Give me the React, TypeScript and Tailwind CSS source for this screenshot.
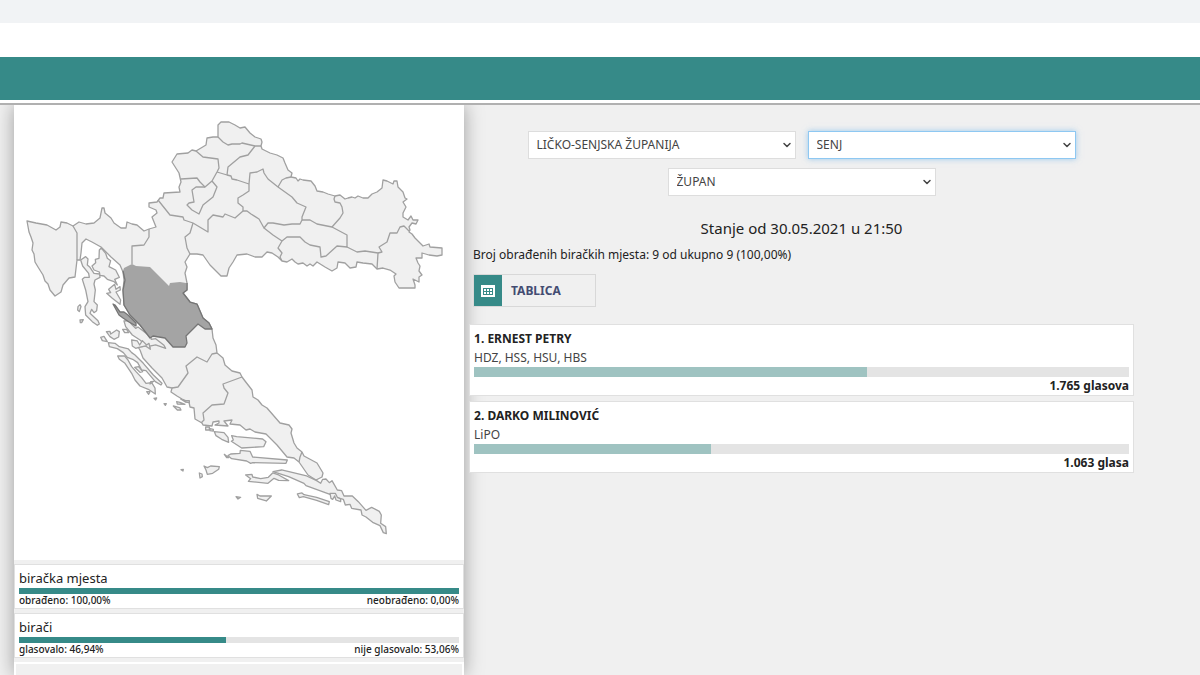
import { useState } from 'react'
import { ChevronDown } from 'lucide-react'

interface Candidate {
  id: number
  name: string
  parties: string
  votes: string
  percent: number
}

const candidates: Candidate[] = [
  { id: 1, name: 'ERNEST PETRY', parties: 'HDZ, HSS, HSU, HBS', votes: '1.765 glasova', percent: 60.06 },
  { id: 2, name: 'DARKO MILINOVIĆ', parties: 'LiPO', votes: '1.063 glasa', percent: 36.17 },
]

const turnout = [
  { title: 'biračka mjesta', left: 'obrađeno: 100,00%', right: 'neobrađeno: 0,00%', percent: 100 },
  { title: 'birači', left: 'glasovalo: 46,94%', right: 'nije glasovalo: 53,06%', percent: 46.94 },
]

// Outer edge of the mainland
const mainland =
  'M218 137L218 125L221 122L229 122L235 125L240 128L245 127L250 133L255 137L261 139L262 142L261 146L262 149L270 153L277 155L283 158L285 163L288 170L292 173L291 177L296 178L298 181L300 179L303 180L311 181L315 186L317 191L323 192L328 194L335 196L340 195L345 199L348 198L352 197L355 198L358 196L363 198L368 198L372 194L377 192L382 188L383 180L387 181L393 184L394 181L397 181L398 187L403 192L405 198L407 199L403 202L406 207L403 213L403 217L408 220L411 216L413 220L418 220L416 224L412 223L409 227L410 230L409 232L412 234L415 238L419 242L423 246L429 244L430 247L442 248L442 255L437 256L429 255L422 253L422 258L416 258L418 263L420 266L419 271L422 275L419 277L419 282L413 279L415 285L415 288L399 288L395 282L394 276L396 274L390 270L383 268L377 269L372 264L363 263L357 262L356 267L350 268L345 263L338 262L337 268L332 271L325 267L317 262L313 266L310 264L307 266L303 263L298 264L295 262L292 259L287 262L282 261L278 257L272 253L267 252L262 257L255 257L247 254L237 255L233 262L229 268L227 276L221 276L215 270L210 265L203 255L197 254L190 254L185 262L187 267L185 273L187 283L187 290L183 293L190 302L197 304L203 318L209 323L212 329L213 338L216 345L217 353L223 358L225 365L232 371L240 373L242 377L245 381L252 390L253 397L258 400L262 405L267 408L280 423L289 425L292 429L291 433L294 443L297 448L302 452L304 456L317 463L323 473L322 477L316 480L308 475L299 462L294 458L287 457L277 445L266 434L255 432L250 429L246 430L240 425L230 424L232 420L224 421L228 426L215 425L219 423L219 421L213 422L212 426L203 425L202 423L195 419L194 408L190 407L189 402L182 399L177 396L171 392L172 388L167 387L162 378L152 368L143 358L140 350L138 347L146 346L150 348L148 343L151 338L140 325L130 315L124 305L123 290L124 280L123 272L120 265L111 257L101 247L92 242L86 239L82 243L81 253L80 260L77 260L75 277L69 278L63 285L61 292L55 296L50 290L48 284L45 281L43 275L38 267L35 262L34 254L32 250L33 243L31 237L29 232L27 221L36 223L47 225L56 230L60 227L61 222L67 223L73 226L79 222L86 224L94 223L100 218L101 213L102 208L104 208L105 213L111 218L114 223L121 228L126 228L127 222L132 224L137 225L144 231L149 229L156 227L152 217L157 213L156 210L149 207L149 203L157 202L160 198L163 198L164 193L180 192L179 187L181 182L179 173L172 162L177 154L188 153L192 150L196 151L206 145L207 138L213 137Z'

// Borders between counties
const borders = [
  'M218 137L223 142L228 145L232 144L240 144L242 143L255 146L261 146',
  'M196 151L203 157L218 159L219 168L217 172L212 181L205 187L200 182L197 178L181 179',
  'M255 146L248 155L240 157L228 167L227 175',
  'M217 172L227 175L231 176L232 179L237 180L249 184',
  'M249 184L250 173L257 172L263 169L264 173L268 179L278 187L292 197L297 203L306 207L302 217L302 220L300 224L292 224L284 225L273 223L268 223L264 228L259 219L251 214L247 211L243 211L243 207L238 203L238 198L243 195L249 191Z',
  'M278 187L282 180L286 178L291 177',
  'M302 220L310 220L317 224L332 227L340 218L343 213L342 207L340 203L335 202L334 199L335 196',
  'M332 227L347 235L347 247L337 246L326 256L321 257L320 247L310 245L305 242L300 237L287 237L282 241L278 248L282 253L280 257L282 261',
  'M264 228L273 235L282 241',
  'M347 247L357 252L365 251L378 253L377 269',
  'M378 253L382 252L379 247L387 242L390 233L397 233L400 227L404 226L409 231',
  'M212 181L217 187L213 197L203 205L199 214L192 210L187 205L189 203L194 202L192 190L196 187L205 187',
  'M158 200L170 215L183 217L184 220L193 223L208 232L208 220L213 215L223 217L225 214L235 218L243 211',
  'M193 223L190 233L185 237L187 248L190 254',
  'M149 229L149 237L144 245L132 246L132 264',
  'M73 226L77 233L77 260',
  'M217 353L212 354L207 362L197 357L186 366L188 373L178 387L172 388',
  'M242 377L223 384L224 388L228 393L224 404L212 405L203 413L204 420L201 423',
  'M302 452L300 457L299 462',
]

const lika =
  'M132 264L136 266L150 267L169 286L170 283L180 282L186 283L187 290L183 293L190 302L197 304L203 318L209 323L212 329L205 329L198 324L186 336L187 343L185 347L173 347L165 338L153 336L150 338L140 325L130 315L124 305L123 290L125 280L123 271L124 268Z'

// Islands, traced per sheet at three times the map scale
const islandSheets = [
  {
    transform: 'translate(14 190) scale(0.3333)',
    paths: [
      'M200 210L215 200L222 207L220 225L228 232L240 250L257 252L258 262L243 270L240 282L244 300L240 335L250 345L248 362L240 368L233 358L228 370L252 392L256 402L250 406L235 395L215 375L213 350L222 335L215 300L205 268L212 262L226 262L224 250L206 228Z',
      'M234 228L245 218L244 208L255 205L256 180L262 174L275 190L280 205L290 212L285 230L305 240L316 262L302 268L310 285L300 275L280 268L270 258L258 256L256 246L240 240Z',
      'M278 310L290 308L284 298L302 283L306 298L318 290L319 300L306 306L320 330L318 343L295 325Z',
      'M192 350L198 344L201 350L196 365L191 360Z',
      'M198 390L208 389L203 398L199 398Z',
      'M330 393L345 392L352 402L365 415L372 411L410 440L412 448L425 446L450 466L455 475L425 465L400 470L378 450L355 435L335 410Z',
      'M326 418L338 418L344 428L332 428Z',
      'M260 442L270 439L280 455L265 452Z',
      'M277 425L288 424L290 432L308 420L316 425L314 441L300 448L288 440Z',
      'M353 450L370 453L377 465L385 452L398 465L405 460L409 478L395 468L375 472L365 475L355 468Z',
    ],
  },
  {
    transform: 'translate(90 250) scale(0.3333)',
    paths: [
      'M55 278L75 280L88 290L115 297L125 308L135 315L160 340L190 375L216 400L213 405L196 395L168 362L155 360L143 338L128 328L112 322L100 308L82 296L58 290Z',
      'M83 318L104 318L114 330L125 350L138 365L155 383L168 400L185 398L195 414L196 432L175 418L150 408L135 390L125 370L105 340L88 328Z',
      'M134 352L146 350L158 365L150 367Z',
      'M182 395L192 394L180 402Z',
      'M170 425L180 425L176 433Z',
      'M192 445L200 444L197 450Z',
      'M222 461L229 461L226 466Z',
      'M260 455L270 457L285 463L262 462Z',
      'M272 447L282 451L298 452L298 458L286 456Z',
      'M250 468L270 474L273 480L262 480Z',
    ],
  },
  {
    transform: 'translate(200 380) scale(0.3333)',
    paths: [
      'M17 141L28 141L28 150L17 150Z',
      'M30 146L40 148L40 153L30 152Z',
      'M43 155L72 158L84 172L86 187L65 178L48 167Z',
      'M95 167L110 170L188 177L198 185L191 200L125 204L94 184L100 180Z',
      'M73 223L86 233L80 233Z',
      'M84 227L92 222L120 220L121 211L150 214L158 231L262 240L258 250L158 248L152 250L140 243L95 236Z',
      'M12 258L22 263L32 258L58 260L56 268L38 280L22 283L18 270Z',
      'M-2 279L6 282L7 290L0 294Z',
      'M-57 269L-50 268L-51 273Z',
      'M137 285L156 283L158 291L182 296L205 292L218 279L236 285L266 302L236 301L222 295L204 310L145 304L152 296Z',
      'M219 275L245 270L320 288L350 302L362 310L368 298L378 297L388 308L396 302L412 330L425 332L432 348L457 348L475 365L498 391L515 382L538 394L544 405L542 430L557 440L559 461L550 458L540 437L518 427L498 411L486 405L483 390L455 385L450 373L436 375L430 358L410 352L390 343L318 317L312 310L266 290Z',
      'M390 340L406 340L412 352L422 357L422 365L408 360L404 348L398 358L393 355Z',
      'M292 342L306 339L312 344L350 352L388 365L386 374L350 361L310 350L298 353Z',
      'M171 343L180 348L214 348L199 363L173 355Z',
      'M108 350L122 352L114 357Z',
    ],
  },
]

function CountyMap() {
  return (
    <svg viewBox="14 105 450 455" className="block w-full" role="img" aria-label="Karta županija">
      <g fill="#f0f0f0" stroke="#a0a0a0" strokeLinejoin="round">
        <path d={mainland} strokeWidth="1.3" />
        <g fill="none" strokeWidth="1.3">
          {borders.map((d) => (
            <path key={d} d={d} />
          ))}
        </g>
        {islandSheets.map((sheet) => (
          <g key={sheet.transform} transform={sheet.transform} strokeWidth="3.9">
            {sheet.paths.map((d) => (
              <path key={d} d={d} />
            ))}
          </g>
        ))}
      </g>
      <g fill="#a4a4a4" stroke="#757575" strokeLinejoin="round">
        <path d={lika} stroke="none" />
        <path
          d="M187 283L187 290L183 293L190 302L197 304L203 318L209 323L212 329L205 329L198 324L186 336L187 343L185 347L173 347L165 338L153 336L150 338L140 325L130 315L124 305L123 290L125 280L123 271"
          fill="none"
          strokeWidth="1.3"
        />
        <path d="M113 304L115 305L120 312L124 312L128 315L136 323L136 326L129 322L123 318L119 315Z" strokeWidth="1.3" />
      </g>
    </svg>
  )
}

interface FilterSelectProps {
  label: string
  options: string[]
  active?: boolean
}

function FilterSelect({ label, options, active = false }: FilterSelectProps) {
  const [value, setValue] = useState(options[0])

  return (
    <div className="relative w-[268px]">
      <select
        aria-label={label}
        value={value}
        onChange={(e) => setValue(e.target.value)}
        className={`block w-full h-7 appearance-none border bg-white pl-2 pr-6 text-[12px] text-[#444444] outline-none ${
          active ? 'border-[#8ec8f2] shadow-[0_0_6px_rgba(102,175,233,0.6)]' : 'border-[#dddddd]'
        }`}
      >
        {options.map((option) => (
          <option key={option}>{option}</option>
        ))}
      </select>
      <ChevronDown className="pointer-events-none absolute right-[3px] top-2 h-3 w-3 text-[#444444]" strokeWidth={3} />
    </div>
  )
}

export default function App() {
  return (
    <div className="flex min-h-screen flex-col bg-[#f0f0f0] font-['Noto_Sans',sans-serif] text-[#222222]">
      {/* Header */}
      <header className="relative z-10 border-b-2 border-[#b0b0b0] bg-white">
        <div className="h-[23px] bg-[#f1f3f5]" />
        <div className="h-[34px]" />
        <div className="h-[43px] bg-[#368a88]" />
        <div className="h-[3px]" />
      </header>

      <div className="flex flex-1">
        {/* Map and turnout */}
        <aside className="ml-3.5 flex w-[450px] shrink-0 flex-col bg-[#f0f0f0] shadow-[0_0_18px_rgba(0,0,0,0.35)]">
          <div className="bg-white">
            <CountyMap />
          </div>
          <div className="flex flex-1 flex-col gap-1 pt-1">
            {turnout.map((item) => (
              <section key={item.title} className="border border-[#e0e0e0] bg-white px-1 pb-0.5 pt-[3px]">
                <h3 className="text-[13px] leading-5">{item.title}</h3>
                <div className="h-1.5 bg-[#e4e4e4]">
                  <div className="h-full bg-[#368a88]" style={{ width: `${item.percent}%` }} />
                </div>
                <div className="flex justify-between text-[10px] font-medium leading-3">
                  <span>{item.left}</span>
                  <span>{item.right}</span>
                </div>
              </section>
            ))}
            <div className="flex-1 border-2 border-b-0 border-white" />
          </div>
        </aside>

        {/* Results */}
        <main className="flex-1 pl-[5px] pr-[66px] pt-[26px]">
          <form className="flex flex-wrap justify-center gap-x-3 gap-y-[9px]">
            <FilterSelect label="Županija" options={['LIČKO-SENJSKA ŽUPANIJA']} />
            <FilterSelect label="Grad ili općina" options={['SENJ']} active />
            <FilterSelect label="Izbor" options={['ŽUPAN']} />
          </form>

          <h1 className="mt-5 text-center text-[15px] leading-6">Stanje od 30.05.2021 u 21:50</h1>
          <p className="ml-1 mt-[3px] text-[12px] leading-6">Broj obrađenih biračkih mjesta: 9 od ukupno 9 (100,00%)</p>

          <button
            type="button"
            className="ml-1 mt-[7px] flex h-[33px] w-[123px] items-stretch border border-[#d8d8d8] text-[12px] font-bold text-[#434c72]"
          >
            <span className="flex w-7 items-center justify-center bg-[#368a88]">
              <svg width="14" height="14" viewBox="0 0 14 14" aria-hidden="true">
                <path fill="#ffffff" fillRule="evenodd" d="M0 1h14v12H0zM2 4v7h10V4z" />
                <path fill="#ffffff" d="M3 5h2v2H3zM6 5h2v2H6zM9 5h2v2H9zM3 8h2v2H3zM6 8h2v2H6zM9 8h2v2H9z" />
              </svg>
            </span>
            <span className="self-center pl-[9px]">TABLICA</span>
          </button>

          <div className="mt-[17px] flex flex-col gap-[5px]">
            {candidates.map((candidate) => (
              <article key={candidate.id} className="border border-[#e0e0e0] bg-white px-1 pt-1">
                <h2 className="text-[12px] font-bold leading-[19px]">
                  {candidate.id}. {candidate.name}
                </h2>
                <p className="text-[12px] leading-[19px] text-[#444444]">{candidate.parties}</p>
                <div className="h-2.5 bg-[#e4e4e4]">
                  <div className="h-full bg-[#9fc3c1]" style={{ width: `${candidate.percent}%` }} />
                </div>
                <p className="text-right text-[12px] font-bold leading-[18px]">{candidate.votes}</p>
              </article>
            ))}
          </div>
        </main>
      </div>
    </div>
  )
}
